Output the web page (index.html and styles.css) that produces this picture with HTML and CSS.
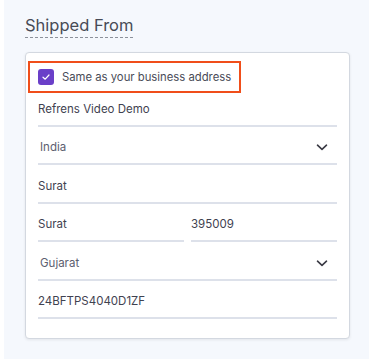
FILE: index.html
```html
<!DOCTYPE html>
<html lang="en">
  <head>
    <meta charset="UTF-8" />
    <meta name="viewport" content="width=device-width, initial-scale=1.0" />
    <title>Shipped From</title>
    <link rel="stylesheet" href="styles.css">
  </head>
  <body>
    <div class="panel">
      <h2 class="section-title"><span>Shipped From</span></h2>

      <div class="address-card">
        <label class="same-address">
          <span class="checkbox">
            <svg width="10" height="10" viewBox="0 0 10 10" fill="none" stroke="#fff" stroke-width="1.2" stroke-linecap="round" stroke-linejoin="round">
              <polyline points="2 5.2 4.2 7.2 8 3"></polyline>
            </svg>
          </span>
          Same as your business address
        </label>

        <div class="fields">
          <div class="field">Refrens Video Demo</div>
          <div class="field select">
            <span>India</span>
            <svg class="chevron" width="12" height="7" viewBox="0 0 12 7" fill="none" stroke="#3a3a44" stroke-width="1.6" stroke-linecap="round" stroke-linejoin="round">
              <polyline points="1.5 1.2 6 5.4 10.5 1.2"></polyline>
            </svg>
          </div>
          <div class="field">Surat</div>
          <div class="field-row">
            <div class="field">Surat</div>
            <div class="field">395009</div>
          </div>
          <div class="field select">
            <span>Gujarat</span>
            <svg class="chevron" width="12" height="7" viewBox="0 0 12 7" fill="none" stroke="#3a3a44" stroke-width="1.6" stroke-linecap="round" stroke-linejoin="round">
              <polyline points="1.5 1.2 6 5.4 10.5 1.2"></polyline>
            </svg>
          </div>
          <div class="field">24BFTPS4040D1ZF</div>
        </div>
      </div>
    </div>
  </body>
</html>
```

FILE: styles.css
```css
:root {
  --page-bg: #f5f8fd;
  --card-border: #d3d8e0;
  --line-color: #dde1ea;
  --text-color: #3f4250;
  --muted-text: #5d6070;
  --accent: #6a3fc8;
  --highlight: #f04e1a;
}

* {
  margin: 0;
  padding: 0;
  box-sizing: border-box;
}

body {
  background-color: #fff;
  font-family: Inter, "Noto Sans", sans-serif;
  color: var(--text-color);
}

.panel {
  margin: 0 5px 0 4px;
  min-height: 359px;
  padding: 15px 20px 0 21px;
  background-color: var(--page-bg);
}

.section-title {
  font-size: 16.5px;
  font-weight: 400;
  line-height: 20px;
  color: #474b56;
}

.section-title span {
  display: inline-block;
  padding-bottom: 2px;
  border-bottom: 1px dashed #8c919b;
}

.address-card {
  margin-top: 14px;
  width: 325px;
  padding: 8px 12px 19px 12px;
  background-color: #fff;
  border: 1px solid var(--card-border);
  border-radius: 4px;
  box-shadow: 0 1px 3px rgba(0, 0, 0, 0.08);
  display: flex;
  flex-direction: column;
}

.same-address {
  align-self: flex-start;
  margin-left: -10px;
  height: 32px;
  padding: 0 8px 0 8px;
  border: 2px solid var(--highlight);
  display: flex;
  align-items: center;
  gap: 8px;
  font-size: 11.3px;
  color: #4a4c58;
}

.checkbox {
  width: 16px;
  height: 16px;
  border-radius: 3px;
  background-color: var(--accent);
  display: flex;
  align-items: center;
  justify-content: center;
}

.fields {
  display: flex;
  flex-direction: column;
}

.field {
  height: 38.4px;
  padding-bottom: 8px;
  border-bottom: 2px solid var(--line-color);
  display: flex;
  align-items: flex-end;
  font-size: 11.5px;
  line-height: 16px;
}

.fields > .field:first-child {
  height: 34px;
}

.field.select {
  padding-left: 2px;
  padding-right: 9px;
  justify-content: space-between;
  color: var(--muted-text);
}

.chevron {
  margin-bottom: 4px;
}

.field-row {
  display: grid;
  grid-template-columns: 1fr 1fr;
  gap: 7px;
}
```
